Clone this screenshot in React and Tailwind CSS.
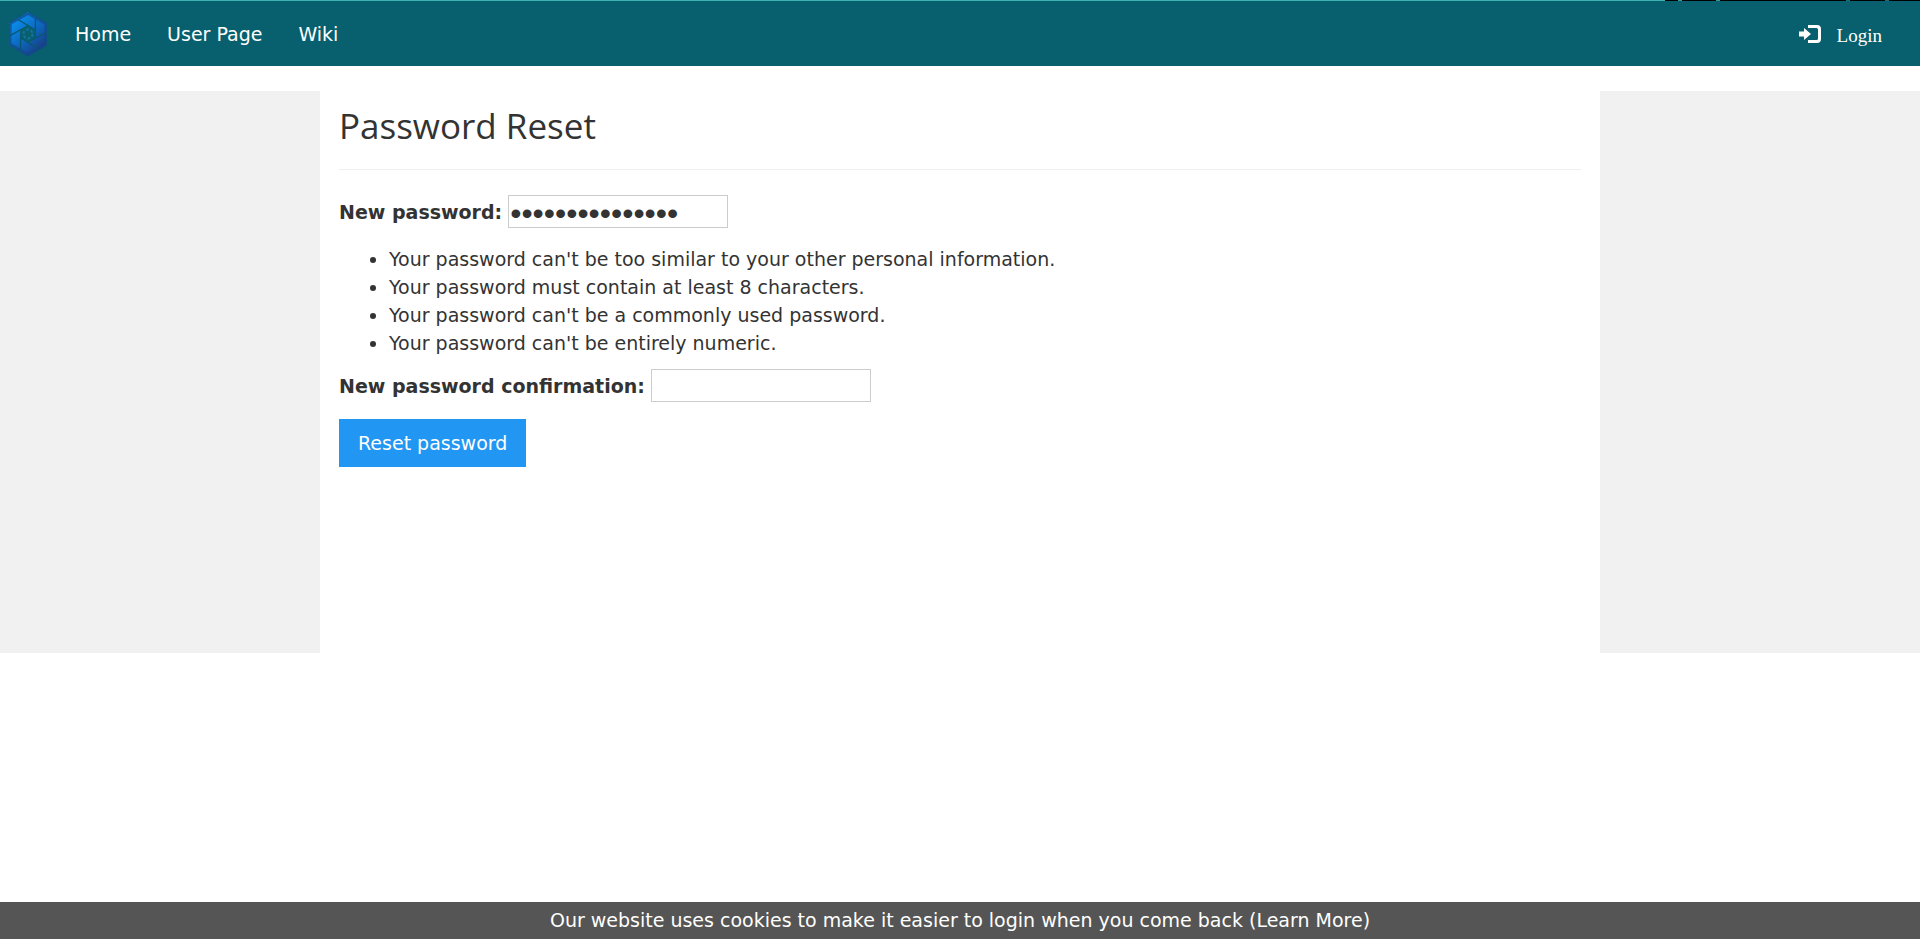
const rules = [
  "Your password can't be too similar to your other personal information.",
  "Your password must contain at least 8 characters.",
  "Your password can't be a commonly used password.",
  "Your password can't be entirely numeric.",
];

const turns = [0, 60, 120, 180, 240, 300];

function Logo() {
  return (
    <svg viewBox="-19 -22 38 44" className="h-11 w-[38px]" aria-hidden="true">
      <defs>
        <linearGradient id="logo-fill" gradientUnits="userSpaceOnUse" x1="-12" y1="-12" x2="14" y2="16">
          <stop offset="0" stopColor="#0a8ae6" />
          <stop offset=".5" stopColor="#0d66bc" />
          <stop offset="1" stopColor="#1b3a80" />
        </linearGradient>
      </defs>
      <path d="M0-22 18.500-11V11L0 22-18.500 11V-11Z" fill="url(#logo-fill)" />
      {turns.map((turn) => (
        <g key={turn} transform={`rotate(${turn})`} fill="none">
          <path d="M-18-10.500 0-20.500" stroke="#12488a" strokeWidth="3" opacity=".7" />
          <path d="M7-4 0-8.500-10-14.500" stroke="#07586c" strokeWidth="1.300" />
        </g>
      ))}
      <path d="M0-8.500 7.500-4V4L0 8.500-7.500 4V-4Z" fill="#085f6d" />
      <circle r="4.500" fill="none" stroke="#1673a8" strokeWidth="2" strokeDasharray="2.700 2" />
    </svg>
  );
}

function LoginIcon() {
  return (
    <svg viewBox="0 0 22 18" className="h-[18px] w-[22px]" fill="#fff" aria-hidden="true">
      <path d="M0 6.500H5V3L12 9 5 15V11.500H0Z" />
      <path d="M9 0H18Q22 0 22 4V14Q22 18 18 18H9V15H17.500Q19 15 19 13.500V4.500Q19 3 17.500 3H9Z" />
    </svg>
  );
}

function PasswordField({ id, label, value }) {
  return (
    <div className="flex items-center gap-[6px]">
      <label htmlFor={id} className="font-bold">{label}</label>
      <input
        id={id}
        type="password"
        defaultValue={value}
        className="h-[33px] w-[220px] border border-[#ccc] px-px pt-1 font-['Liberation_Sans',sans-serif] text-[32px]"
      />
    </div>
  );
}

export default function App() {
  return (
    <div className="flex min-h-screen flex-col bg-white font-['DejaVu_Sans',sans-serif] text-[19px] leading-7 text-[#333]">
      <div className="flex h-px bg-[#3fb3b3]">
        <div className="ml-auto flex w-[255px] bg-black pr-[31px] pl-[13px]">
          <span className="w-1 bg-[#2a9a9a]" />
          <span className="ml-[34px] w-1 bg-[#2a9a9a]" />
          <span className="ml-auto w-1 bg-[#14707c]" />
          <span className="ml-[35px] w-1 bg-[#14707c]" />
        </div>
      </div>
      <nav className="flex h-[65px] items-center bg-[#085f6d] pl-[9px] text-white">
        <a href="#home" aria-label="Start page"><Logo /></a>
        <a href="#home" className="ml-7">Home</a>
        <a href="#user" className="ml-9">User Page</a>
        <a href="#wiki" className="ml-9">Wiki</a>
        <a href="#login" className="mr-[38px] ml-auto flex items-center gap-4 font-['Liberation_Serif',serif]">
          <LoginIcon />
          <span className="pt-1">Login</span>
        </a>
      </nav>
      <div className="mt-[25px] grid grid-cols-[1fr_4fr_1fr]">
        <aside className="bg-[#f1f1f1]" />
        <main className="min-h-[562px] px-[19px]">
          <h1 className="border-b border-[#eee] pt-[10px] pb-[19px] font-['Open_Sans',sans-serif] text-[35px] leading-[49px]">
            Password Reset
          </h1>
          <form className="pt-[25px]" onSubmit={(e) => e.preventDefault()}>
            <PasswordField id="new-password" label="New password:" value="correcthorse123" />
            <ul className="mt-[17px] mb-3 list-disc pl-[50px]">
              {rules.map((rule) => <li key={rule}>{rule}</li>)}
            </ul>
            <PasswordField id="confirm-password" label="New password confirmation:" />
            <button type="submit" className="mt-[17px] h-12 bg-[#2196f3] px-[19px] text-white">Reset password</button>
          </form>
        </main>
        <aside className="bg-[#f1f1f1]" />
      </div>
      <footer className="mt-auto h-[37px] bg-[#555] pt-1 text-center text-white">
        Our website uses cookies to make it easier to login when you come back (<a href="#learn">Learn More</a>)
      </footer>
    </div>
  );
}
